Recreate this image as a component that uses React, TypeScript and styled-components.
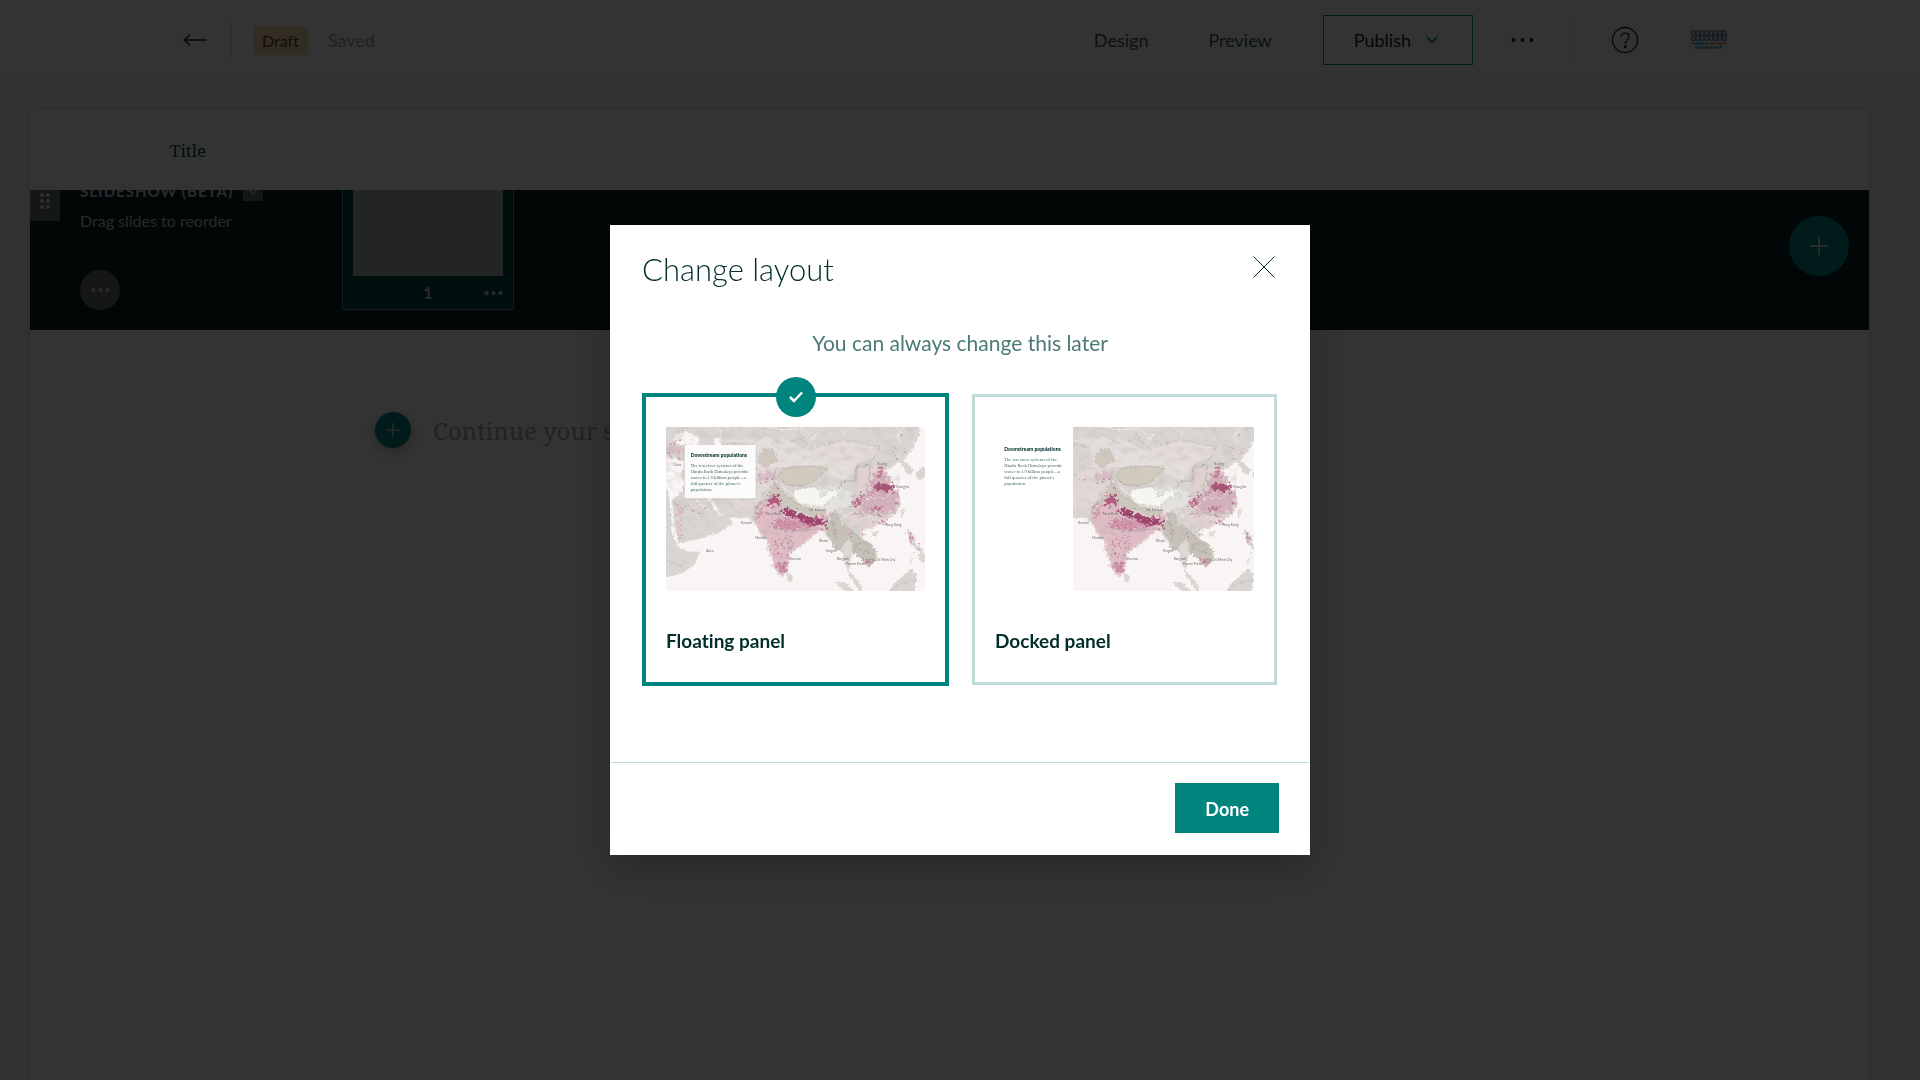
import React, { useState } from "react";
import styled, { createGlobalStyle } from "styled-components";

const teal = "#00857e";
const ink = "#002e2a";
const sans = '"Lato", "Open Sans", sans-serif';
const serif = '"Noto Serif", "Droid Serif", "DejaVu Serif", serif';

const GlobalStyle = createGlobalStyle`
  *, *::before, *::after { box-sizing: border-box; }
  html, body { margin: 0; height: 100%; overflow: hidden; background: #f8f8f8; }
  body { font-family: ${sans}; color: ${ink}; font-variant-ligatures: none; }
  #root { height: 100%; }
  button, input { font: inherit; color: inherit; }
  button { border: 0; padding: 0; background: none; cursor: pointer; }
  svg { display: block; flex: none; }
`;

const Page = styled.div`
  display: flex;
  flex-direction: column;
  min-height: 100%;
`;

const TopBar = styled.header`
  display: flex;
  align-items: center;
  height: 79px;
  padding: 2px 193px 0 183px;
  background: #fff;
  border-bottom: 1px solid #efefef;
  font-size: 18px;
`;

const Divider = styled.span<{ $before: number; $after: number }>`
  width: 1px;
  height: 45px;
  margin: 0 ${(p) => p.$after}px 0 ${(p) => p.$before}px;
  background: #e2e4e4;
`;

const DraftTag = styled.span`
  padding: 0 9px;
  border-radius: 2px;
  background: #ffdcb4;
  color: #5c4210;
  font-size: 16px;
  line-height: 29px;
`;

const SavedNote = styled.span`
  margin-left: 20px;
  color: #9aa8a6;
`;

const Actions = styled.div`
  display: flex;
  align-items: center;
  margin-left: auto;
`;

const Views = styled.nav`
  display: flex;
  gap: 60px;
  margin-right: 51px;
`;

const NavLink = styled.a`
  color: #2f5a55;
  text-decoration: none;
`;

const PublishButton = styled.button`
  display: flex;
  align-items: center;
  gap: 15px;
  height: 50px;
  padding: 0 34px 0 30px;
  border: 1px solid ${teal};
`;

const DotsButton = styled.button`
  margin-left: 38px;
`;

const Builder = styled.main`
  flex: 1;
  margin: 31px 51px 0 30px;
  background: #fff;
  box-shadow: 0 0 10px rgba(0, 0, 0, 0.12);
`;

const TitleBar = styled.div`
  display: flex;
  align-items: center;
  height: 80px;
  padding: 0 140px;
  font-family: ${serif};
  font-size: 17px;
  color: #004a44;
`;

const SlideshowBand = styled.section`
  display: flex;
  align-items: flex-end;
  height: 140px;
  padding-right: 20px;
  overflow: hidden;
  background: #002320;
  color: #c5d2d0;
`;

const Grip = styled.button`
  display: grid;
  place-items: center;
  align-self: flex-start;
  width: 30px;
  height: 31px;
  padding-bottom: 10px;
  background: #6a7573;
`;

const SlideshowInfo = styled.div`
  display: flex;
  flex-direction: column;
  align-items: flex-start;
  width: 222px;
  margin: 0 40px 20px 20px;
`;

const SlideshowHeading = styled.div`
  display: flex;
  align-items: center;
  gap: 10px;
  h2 {
    margin: 0;
    font-size: 15px;
    line-height: 20px;
    font-weight: 900;
    letter-spacing: 1px;
    white-space: nowrap;
  }
`;

const HeadingToggle = styled.button`
  display: grid;
  place-items: center;
  width: 20px;
  height: 20px;
  background: #6a7573;
`;

const Hint = styled.p`
  margin: 8px 0 37px;
  font-size: 16px;
  line-height: 24px;
`;

const RoundButton = styled.button<{ $size: number; $fill: string }>`
  display: grid;
  place-items: center;
  width: ${(p) => p.$size}px;
  height: ${(p) => p.$size}px;
  flex: none;
  border-radius: 50%;
  background: ${(p) => p.$fill};
`;

const Slide = styled.article`
  width: 172px;
  margin-bottom: 20px;
  padding: 10px 10px 8px;
  border: 1px solid #708a87;
  background: #004741;
`;

const SlidePreview = styled.div`
  height: 150px;
  background: #b1b5b2;
`;

const SlideFooter = styled.div`
  display: grid;
  grid-template-columns: 1fr auto 1fr;
  align-items: center;
  height: 25px;
  padding-top: 7px;
  font-size: 16px;
  font-weight: 900;
  button {
    justify-self: end;
  }
  span {
    grid-column: 2;
  }
`;

const AddSlide = styled.div`
  margin: 0 0 54px auto;
`;

const Composer = styled.div`
  display: flex;
  align-items: center;
  gap: 22px;
  padding: 80px 345px 0;
`;

const AddBlock = styled(RoundButton)`
  box-shadow: 0 4px 12px rgba(0, 0, 0, 0.25);
`;

const StoryInput = styled.input`
  flex: 1;
  min-width: 0;
  height: 40px;
  border: 0;
  padding: 0;
  outline: 0;
  background: none;
  font-family: ${serif};
  font-size: 24px;
  &::placeholder {
    color: #a3adab;
    opacity: 1;
  }
`;

const Overlay = styled.div`
  position: fixed;
  inset: 0;
  display: flex;
  align-items: center;
  justify-content: center;
  background: rgba(0, 0, 0, 0.8);
`;

const Dialog = styled.div`
  width: 700px;
  border: 1px solid #fff;
  background: #fff;
  box-shadow: 0 12px 40px rgba(0, 0, 0, 0.25);
`;

const DialogHeader = styled.header`
  display: flex;
  align-items: flex-start;
  justify-content: space-between;
  padding: 21px 34px 0 31px;
  h1 {
    margin: 0;
    font-size: 31px;
    line-height: 44px;
    font-weight: 300;
  }
`;

const CloseButton = styled.button`
  margin-top: 9px;
`;

const Subtitle = styled.p`
  margin: 38px 0 36px;
  text-align: center;
  font-size: 21px;
  line-height: 28px;
  color: #4c7a75;
`;

const Options = styled.fieldset`
  display: grid;
  grid-template-columns: 1fr 1fr;
  gap: 22px;
  margin: 0;
  padding: 0 31px 76px;
  border: 0;
`;

const Option = styled.label<{ $selected: boolean }>`
  position: relative;
  margin: ${(p) => (p.$selected ? 0 : 1)}px;
  padding: 30px 20px 29px;
  border: ${(p) => (p.$selected ? `4px solid ${teal}` : "3px solid #c0dcda")};
  cursor: pointer;
`;

const HiddenRadio = styled.input`
  position: absolute;
  opacity: 0;
`;

const CheckBadge = styled.span`
  position: absolute;
  top: -20px;
  left: 50%;
  display: grid;
  place-items: center;
  width: 40px;
  height: 40px;
  margin-left: -20px;
  border-radius: 50%;
  background: ${teal};
`;

const Thumb = styled.span`
  display: block;
  > svg {
    width: 100%;
    height: auto;
  }
`;

const OptionName = styled.span`
  display: block;
  margin-top: 38px;
  font-size: 19px;
  line-height: 24px;
  font-weight: 700;
`;

const DialogFooter = styled.footer`
  display: flex;
  justify-content: flex-end;
  padding: 20px 30px 21px;
  border-top: 1px solid #b9dad7;
`;

const DoneButton = styled.button`
  height: 50px;
  padding: 2px 30px 0;
  background: ${teal};
  color: #fff;
  font-size: 18px;
  font-weight: 700;
`;

const Dots = ({ color, gap = 7, r = 2 }: { color: string; gap?: number; r?: number }) => (
  <svg width={gap * 2 + r * 2 + 1} height="6" viewBox={`0 0 ${gap * 2 + r * 2 + 1} 6`} fill={color}>
    {[0, 1, 2].map((i) => (
      <circle key={i} cx={r + 0.5 + i * gap} cy="3" r={r} />
    ))}
  </svg>
);

const Plus = ({ size, width = 2, color = "#c5cccb" }: { size: number; width?: number; color?: string }) => (
  <svg width={size} height={size} viewBox="0 0 18 18" stroke={color} strokeWidth={width}>
    <path d="M9 0v18M0 9h18" />
  </svg>
);

const Chevron = ({ color }: { color: string }) => (
  <svg width="12" height="8" viewBox="0 0 12 8" fill="none" stroke={color} strokeWidth="1.6">
    <path d="M1 1l5 5.5L11 1" />
  </svg>
);

/* Small repeatable random source, so that the city specks stay put between renders. */
const specks = (seed: number, n: number, cx: number, cy: number, rx: number, ry: number) => {
  let s = seed;
  const next = () => {
    s = (s * 16807) % 2147483647;
    return s / 2147483647;
  };
  return Array.from({ length: n }, () => {
    const a = next() * Math.PI * 2;
    const d = Math.sqrt(next());
    return { x: cx + Math.cos(a) * d * rx, y: cy + Math.sin(a) * d * ry, r: 0.8 + next() * 2 };
  });
};

const cities = [
  ...specks(11, 70, 425, 500, 34, 70),
  ...specks(23, 40, 450, 430, 60, 22),
  ...specks(37, 60, 700, 370, 72, 62),
  ...specks(41, 24, 385, 350, 36, 60),
  ...specks(53, 14, 770, 205, 28, 50),
  ...specks(67, 16, 110, 215, 28, 40),
  ...specks(71, 8, 170, 385, 40, 18),
  ...specks(83, 18, 600, 470, 36, 50),
  ...specks(97, 12, 830, 485, 24, 36),
  ...specks(101, 12, 350, 285, 60, 26),
];

const placeNames: [number, number, string][] = [
  [303, 431, "Karachi"],
  [345, 478, "Mumbai"],
  [447, 539, "Chennai"],
  [378, 404, "New Delhi"],
  [507, 392, "Mt. Everest"],
  [536, 487, "Dhaka"],
  [557, 515, "Yangon"],
  [590, 541, "Bangkok"],
  [617, 555, "Phnom Penh"],
  [690, 544, "Ho Chi Minh City"],
  [735, 439, "Hong Kong"],
  [768, 325, "Shanghai"],
  [712, 254, "Beijing"],
  [100, 258, "Cairo"],
  [198, 517, "Aden"],
];

const India =
  "M345 425L352 380L385 352L420 378L470 400L520 412L562 398L582 405L562 430L548 452L530 455L512 474L480 500L448 520L445 560L432 584L418 588L402 556L390 522L382 476L362 465Z";
const China =
  "M640 385L632 350L648 300L650 262L690 255L712 262L735 252L752 262L722 280L756 290L745 306L762 326L780 346L780 378L765 400L735 425L700 442L672 448L640 430L612 418Z";

/* The map keeps its scale; a narrower view is set against the right edge. */
const frame = (viewBox: string) => {
  const width = Number(viewBox.split(" ")[2]);
  return { x: 777 - width, y: 0, width, height: 492 };
};

const PopulationMap = ({ id, viewBox, children }: { id: string; viewBox: string; children: React.ReactNode }) => (
  <svg viewBox="0 0 777 492" role="img" aria-label="Map of downstream populations in Asia">
    <defs>
      <filter id={`${id}-coast`} x="-5%" y="-5%" width="110%" height="110%">
        <feTurbulence type="fractalNoise" baseFrequency="0.12" numOctaves="3" seed="4" />
        <feDisplacementMap in="SourceGraphic" scale="14" xChannelSelector="R" yChannelSelector="G" />
      </filter>
      <filter id={`${id}-relief`} x="0" y="0" width="100%" height="100%">
        <feTurbulence type="fractalNoise" baseFrequency="0.03 0.045" numOctaves="4" seed="9" />
        <feColorMatrix values="0 0 0 0 0.55  0 0 0 0 0.5  0 0 0 0 0.48  1.1 0 0 0 -0.5" />
        <feComposite in2="SourceGraphic" operator="in" />
      </filter>
      <filter id={`${id}-density`} x="-20%" y="-20%" width="140%" height="140%">
        <feTurbulence type="fractalNoise" baseFrequency="0.09" numOctaves="3" seed="2" />
        <feDisplacementMap in="SourceGraphic" scale="38" xChannelSelector="R" yChannelSelector="G" />
        <feGaussianBlur stdDeviation="1.6" />
      </filter>
    </defs>
    <svg {...frame(viewBox)} viewBox={viewBox}>
      <rect x="60" y="130" width="810" height="520" fill="#f8f5f4" />
      <g filter={`url(#${id}-coast)`}>
        <g fill="#dad5d2">
          <path d="M60 120H840L838 165L824 195L806 222L790 240L800 248L820 268L816 284L800 282L792 262L778 246L765 254L752 266L735 258L722 280L756 290L745 306L762 326L780 346L780 378L765 400L735 425L700 442L672 450L662 458L672 476L692 492L710 516L708 542L686 562L672 552L660 532L640 520L628 546L628 575L648 595L662 612L668 640L650 622L630 592L618 562L612 530L600 505L585 512L575 490L560 470L548 450L530 455L512 474L480 500L448 520L445 560L432 584L418 588L402 556L390 522L382 476L362 465L345 430L325 414L275 412L238 398L222 362L200 352L218 378L238 406L265 402L278 432L238 456L180 476L118 490L104 440L96 360L130 330L134 300L120 284L70 292L60 260Z" />
          <path d="M60 320L84 330L92 392L96 460L114 500L146 516L182 514L162 556L122 582L60 594Z" />
          <path d="M436 570L458 592L456 608L442 604L440 588Z" />
          <path d="M786 384L794 392L788 414L782 404Z" />
          <path d="M696 458L714 452L710 470L698 472Z" />
          <path d="M585 606L612 606L645 632L660 650L620 640Z" />
          <path d="M745 640L762 610L790 588L812 566L832 586L822 640Z" />
          <path d="M800 446L814 456L822 488L838 498L852 510L846 524L826 506L806 482Z" />
          <path d="M834 524L852 522L852 546L838 540ZM812 540L822 528L806 560Z" />
          <path d="M826 282L842 266L862 256V286L836 304Z" />
        </g>
        <g fill="#f8f5f4">
          <path d="M100 180L108 162L140 156L176 170L176 192L146 196L112 192Z" />
          <path d="M60 236L92 234L130 242L132 266L112 290L84 288L60 292Z" />
          <path d="M222 172L240 176L246 205L236 222L226 200Z" />
        </g>
        <path d="M250 180L420 170L560 240L640 235L650 262L610 300L520 262L420 262L350 270L340 200Z" fill="#e4dfdc" />
        <path d="M520 200L600 180L720 195L700 235L600 262L530 240Z" fill="#e3dcdb" />
        <path d="M300 270L400 262L400 300L344 380L300 400L270 350Z" fill="#e2d9d7" />
        <path d="M462 330L530 324L590 318L640 340L632 372L602 400L520 392L462 366Z" fill="#e3e2dd" />
        <path d="M414 288L430 266L470 260L520 258L564 266L540 286L524 304L480 318L440 314Z" fill="#d3cabf" stroke="#a6a69d" strokeWidth="2" />
        <path d="M356 225L372 205L398 208L412 240L396 252L372 262L354 246Z" fill="#d2cac1" stroke="#b1aea6" strokeWidth="1.5" />
        <path d="M342 395L352 372L384 345L402 308L394 284L410 290L432 340L492 382L560 392L545 408L480 396L420 378L385 364L360 392Z" fill="#cdc6bd" />
        <path d={India} fill="#e5d3d5" />
        <path d={China} fill="#dfd2d1" />
        <path d="M556 412L582 392L600 402L604 434L640 450L662 476L690 486L710 514L706 546L684 558L660 534L640 520L628 500L612 482L604 510L586 512L574 482L552 448Z" fill="#c6c1b8" />
        <path d="M610 506L622 474L636 492L632 518L616 524Z" fill="#ded9d6" />
      </g>
      <g filter={`url(#${id}-relief)`}>
        <path d="M78 141H835L780 250L780 380L700 442L600 500L520 470L418 588L350 430L240 400L180 476L100 480L78 300Z" />
      </g>
      <path
        d="M464 328L525 320L540 336L538 352L586 326L594 346L566 358L548 384L510 374L474 370L460 350Z"
        fill="#f6f5f1"
        stroke="#a6a69d"
        filter={`url(#${id}-coast)`}
      />
      <g filter={`url(#${id}-density)`}>
        <path d={India} fill="#cf8fa4" opacity="0.3" />
        <path d="M650 360L690 340L690 300L730 258L746 300L776 340L770 390L720 402L660 400Z" fill="#c4839a" opacity="0.4" />
        <path d="M426 384L442 384L474 400L520 412L556 424L556 438L520 438L470 414L432 402Z" fill="#8d2756" opacity="0.8" />
        <path d="M400 416L500 424L540 440L450 450L396 442Z" fill="#c17391" opacity="0.5" />
        <path d="M384 372L394 344L410 344L422 362L404 378Z" fill="#a53d68" opacity="0.75" />
        <path d="M346 402L368 380L374 396L354 422Z" fill="#bd6c8a" opacity="0.4" />
        <path d="M698 318L728 308L764 324L756 334L704 332Z" fill="#8f3159" opacity="0.7" />
        <path d="M634 374L650 356L668 354L660 374L644 382Z" fill="#a84a71" opacity="0.65" />
        <path d="M706 290L720 266L732 274L720 300Z" fill="#b25a7c" opacity="0.6" />
        <path d="M412 554L440 546L434 580L420 584Z" fill="#b7557c" opacity="0.45" />
        <path d="M700 380L720 374L716 392L702 392Z" fill="#a9486f" opacity="0.55" />
        <path d="M78 196L132 200L120 228L84 222Z" fill="#cfa0ae" opacity="0.4" />
        <path d="M350 282L404 268L398 300L360 310Z" fill="#d3a0b1" opacity="0.4" />
        <path d="M114 360L124 390L124 480L116 480Z" fill="#d3a0b1" opacity="0.5" />
        <path d="M674 540L698 542L684 560Z" fill="#b55d80" opacity="0.6" />
        <path d="M806 460L818 464L822 490L812 486Z" fill="#b55d80" opacity="0.5" />
        <path d="M718 428L742 420L732 436ZM664 454L680 456L670 470Z" fill="#b55d80" opacity="0.6" />
      </g>
      <g fill="none" stroke="#a6a29d" strokeWidth="1.2" filter={`url(#${id}-coast)`}>
        <path d="M248 196L300 190L340 205M360 150L420 190L480 176L520 205L610 180L720 200L690 250" />
        <path d="M100 370L180 400L230 440M120 290L170 350M146 250L134 330M90 500L140 550" strokeOpacity="0.6" />
        <path d="M414 288L394 284L404 316L440 350L492 382L560 394" />
        <path d="M590 324L600 322L606 306L648 300L650 260L690 256L686 300L712 316M386 440L450 454L540 446M346 420L350 380L400 350" stroke="#7f8480" />
        <path d="M640 400L720 404L770 396M632 350L690 340M612 430L660 476M574 420L590 480M644 520L650 490L690 488M690 510L668 520M656 508L700 524" stroke="#8d8e88" />
        <path d="M745 640L780 610L830 600M78 540L130 560" strokeOpacity="0.7" />
      </g>
      <g fill="none" stroke="#fff" strokeWidth="2" strokeOpacity="0.85" filter={`url(#${id}-coast)`}>
        <path d="M236 141L244 162L230 190M380 141L430 150L470 146L500 170M480 141L520 178L530 160M590 141L620 165M790 141L770 170L790 200" />
        <path d="M612 412L660 378L690 352L730 356L776 322M560 392L570 420L548 440M404 300L440 332L500 370M640 370L700 420L740 420" />
        <path d="M132 300L180 372L214 402" strokeOpacity="0.7" />
      </g>
      <g fill="#b0446f" fillOpacity="0.5">
        {cities.map((c, i) => (
          <circle key={i} cx={c.x} cy={c.y} r={c.r} />
        ))}
      </g>
      <g fill="#77706f" fontFamily={sans} fontSize="10">
        {placeNames
          .filter(([x]) => x > Number(viewBox.split(" ")[0]))
          .map(([x, y, name]) => (
            <text key={name} x={x} y={y}>
              {name}
            </text>
          ))}
      </g>
    </svg>
    {children}
  </svg>
);

const story = [
  "The ten river systems of the",
  "Hindu Kush Himalaya provide",
  "water to 1.9 billion people—a",
  "full quarter of the planet's",
  "population.",
];

const Narrative = ({ x, y }: { x: number; y: number }) => (
  <g>
    <text x={x} y={y} fill={ink} fontFamily={sans} fontSize="15" fontWeight="900">
      Downstream populations
    </text>
    <g fill="#4f706d" fontFamily={serif} fontSize="12">
      {story.map((line, i) => (
        <text key={line} x={x} y={y + 31 + i * 18}>
          {line}
        </text>
      ))}
    </g>
  </g>
);

const layouts = [
  {
    id: "floating",
    name: "Floating panel",
    thumb: (
      <PopulationMap id="floating" viewBox="78 141 777 492">
        <rect x="53" y="54" width="219" height="164" fill="#000" opacity="0.06" />
        <rect x="56" y="54" width="213" height="160" fill="#fff" fillOpacity="0.93" />
        <Narrative x={74} y={90} />
      </PopulationMap>
    ),
  },
  {
    id: "docked",
    name: "Docked panel",
    thumb: (
      <PopulationMap id="docked" viewBox="288 141 543 492">
        <Narrative x={28} y={72} />
      </PopulationMap>
    ),
  },
];

const LogoButton = styled.button`
  margin-left: 52px;
`;

const OrgLogo = () => (
  <LogoButton aria-label="Thames Estuary Partnership">
    <svg width="36" height="20" viewBox="0 0 36 20">
      <g strokeWidth="1.2">
        {[0, 1, 2, 3, 4, 5, 6, 7].map((i) => (
          <React.Fragment key={i}>
            <ellipse cx={2.5 + i * 4.4} cy="3" rx="2" ry="2.500" fill="#dfe6e8" stroke={i % 2 ? "#4f8c94" : "#5f7f9c"} />
            <ellipse cx={2.5 + i * 4.4} cy="8" rx="2" ry="2.500" fill="#dfe6e8" stroke={i % 2 ? "#3f83ac" : "#6a9484"} />
          </React.Fragment>
        ))}
      </g>
      <g fontFamily={sans} fontWeight="900" fontSize="4">
        <text x="0" y="15" fill="#0a78b4">
          THAMES
        </text>
        <text x="18" y="15" fill="#d4561a">
          ESTUARY
        </text>
        <text x="4" y="19" fill="#0a78b4">
          PARTNERSHIP
        </text>
      </g>
    </svg>
  </LogoButton>
);

export default function App() {
  const [layout, setLayout] = useState("floating");
  return (
    <>
      <GlobalStyle />
      <Page>
        <TopBar>
          <button aria-label="Back">
            <svg width="24" height="14" viewBox="0 0 24 14" fill="none" stroke={ink} strokeWidth="1.5">
              <path d="M23.500 7H1.500M7 1.500L1.500 7L7 12.500" />
            </svg>
          </button>
          <Divider $before={24} $after={21} />
          <DraftTag>Draft</DraftTag>
          <SavedNote>Saved</SavedNote>
          <Actions>
            <Views>
              <NavLink href="#design">Design</NavLink>
              <NavLink href="#preview">Preview</NavLink>
            </Views>
            <PublishButton>
              Publish
              <Chevron color={teal} />
            </PublishButton>
            <DotsButton aria-label="More actions">
              <Dots color={ink} gap={9} />
            </DotsButton>
            <Divider $before={39} $after={37} />
            <button aria-label="Help">
              <svg width="28" height="28" viewBox="0 0 28 28" fill="none" stroke={ink} strokeWidth="1.3">
                <circle cx="14" cy="14" r="12.500" />
                <path d="M10 11.200C10 8.600 11.700 7.200 14 7.200C16.400 7.200 18 8.700 18 10.800C18 13.600 14.200 13.800 14.200 17.800" />
                <circle cx="14.200" cy="20.800" r="0.800" fill={ink} />
              </svg>
            </button>
            <OrgLogo />
          </Actions>
        </TopBar>
        <Builder>
          <TitleBar>Title</TitleBar>
          <SlideshowBand>
            <Grip aria-label="Move block">
              <svg width="10" height="16" viewBox="0 0 10 16" fill="#dfe3e2">
                {[2, 8, 14].map((y) => (
                  <React.Fragment key={y}>
                    <circle cx="2" cy={y} r="2" />
                    <circle cx="8" cy={y} r="2" />
                  </React.Fragment>
                ))}
              </svg>
            </Grip>
            <SlideshowInfo>
              <SlideshowHeading>
                <h2>SLIDESHOW (BETA)</h2>
                <HeadingToggle aria-label="Block options">
                  <Chevron color="#c5d2d0" />
                </HeadingToggle>
              </SlideshowHeading>
              <Hint>Drag slides to reorder</Hint>
              <RoundButton $size={40} $fill="#6a7573" aria-label="Slideshow options">
                <Dots color="#c5d2d0" />
              </RoundButton>
            </SlideshowInfo>
            <Slide>
              <SlidePreview />
              <SlideFooter>
                <span>1</span>
                <button aria-label="Slide options">
                  <Dots color="#c5d2d0" />
                </button>
              </SlideFooter>
            </Slide>
            <AddSlide>
              <RoundButton $size={60} $fill={teal} aria-label="Add slide">
                <Plus size={18} />
              </RoundButton>
            </AddSlide>
          </SlideshowBand>
          <Composer>
            <AddBlock $size={36} $fill={teal} aria-label="Add content block">
              <Plus size={14} />
            </AddBlock>
            <StoryInput aria-label="Story text" placeholder="Continue your story" />
          </Composer>
        </Builder>
      </Page>
      <Overlay>
        <Dialog role="dialog" aria-modal="true" aria-labelledby="dialog-title">
          <DialogHeader>
            <h1 id="dialog-title">Change layout</h1>
            <CloseButton aria-label="Close">
              <svg width="22" height="22" viewBox="0 0 22 22" stroke={ink} strokeWidth="1">
                <path d="M0.500 0.500L21.500 21.500M21.500 0.500L0.500 21.500" />
              </svg>
            </CloseButton>
          </DialogHeader>
          <Subtitle>You can always change this later</Subtitle>
          <Options aria-label="Layout">
            {layouts.map((l) => (
              <Option key={l.id} $selected={l.id === layout}>
                <HiddenRadio
                  type="radio"
                  name="layout"
                  value={l.id}
                  checked={l.id === layout}
                  onChange={() => setLayout(l.id)}
                />
                {l.id === layout && (
                  <CheckBadge>
                    <svg width="14" height="12" viewBox="0 0 14 12" fill="none" stroke="#fff" strokeWidth="2.500">
                      <path d="M1 6L5 10L13 1.500" />
                    </svg>
                  </CheckBadge>
                )}
                <Thumb>{l.thumb}</Thumb>
                <OptionName>{l.name}</OptionName>
              </Option>
            ))}
          </Options>
          <DialogFooter>
            <DoneButton>Done</DoneButton>
          </DialogFooter>
        </Dialog>
      </Overlay>
    </>
  );
}
